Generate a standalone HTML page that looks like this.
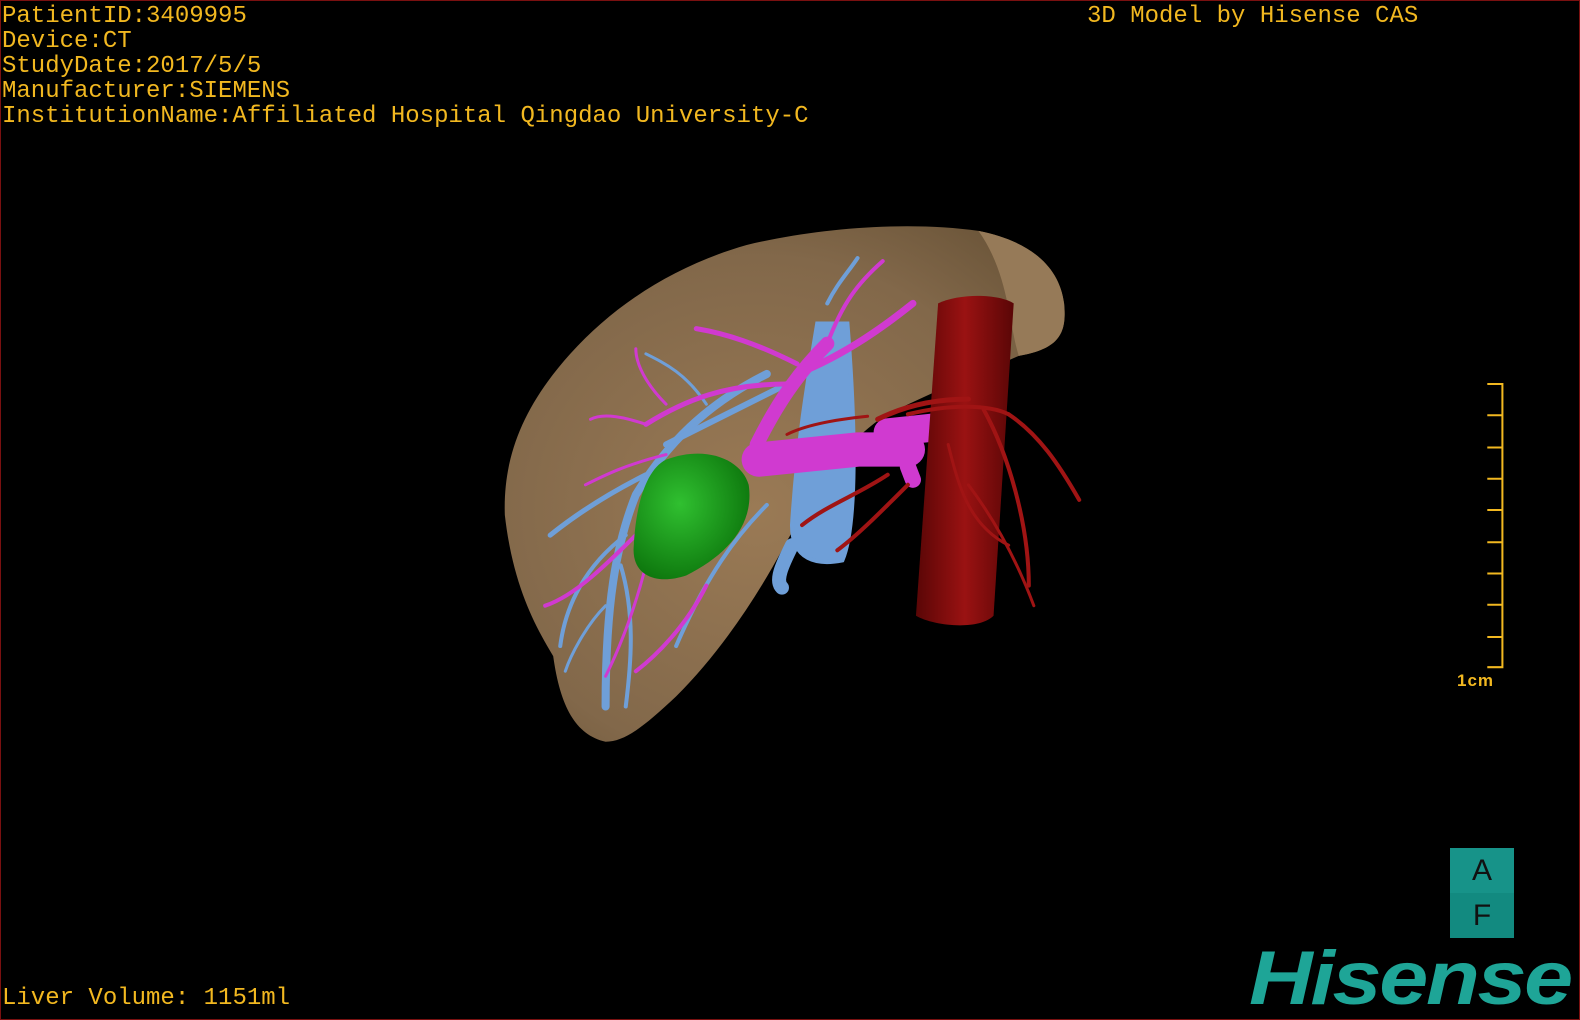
<!DOCTYPE html>
<html><head><meta charset="utf-8"><style>
html,body{margin:0;padding:0;background:#000;}
#w{position:relative;width:1580px;height:1020px;background:#000;overflow:hidden;box-sizing:border-box;border:1px solid #7a1010;}
.t{position:absolute;font-family:"Liberation Mono",monospace;font-size:24px;color:#f2b820;white-space:pre;line-height:25px;}
svg{position:absolute;left:0;top:0;}
</style></head><body><div id="w">
<svg width="1580" height="1020" viewBox="0 0 1568 1012">
<defs>
<radialGradient id="lv" cx="0.45" cy="0.55" r="0.7"><stop offset="0" stop-color="#9a7a55"/><stop offset="0.7" stop-color="#82684a"/><stop offset="1" stop-color="#6a5438"/></radialGradient>
<radialGradient id="gr" cx="0.4" cy="0.4" r="0.7"><stop offset="0" stop-color="#30c030"/><stop offset="1" stop-color="#0a700a"/></radialGradient>
<linearGradient id="ao" x1="0" x2="1"><stop offset="0" stop-color="#5a0606"/><stop offset="0.5" stop-color="#9a1212"/><stop offset="1" stop-color="#5a0606"/></linearGradient>
</defs>
<path d="M600,735 C570,728 555,700 548,650 C530,620 508,580 500,510 C498,450 520,400 565,350 C610,300 670,262 740,242 C810,225 900,218 970,228 C1020,238 1050,262 1055,300 C1058,330 1050,345 1010,352 C970,370 930,385 880,410 C830,440 800,500 775,545 C745,600 710,650 670,690 C640,718 620,735 600,735 Z" fill="url(#lv)"/>
<path d="M970,228 C1020,238 1050,262 1055,300 C1058,330 1050,345 1010,352 C1000,320 1000,270 970,228 Z" fill="#967a58"/>
<g stroke="#6f9fd8" fill="none" stroke-linecap="round">
<path d="M810,320 C800,380 790,440 785,520 C785,555 810,560 835,555 C850,520 848,420 840,320 Z" fill="#6f9fd8" stroke-width="4"/>
<path d="M785,540 C775,560 768,575 775,582" stroke-width="14"/>
<path d="M760,370 C700,400 660,440 630,490 C610,540 600,600 600,700" stroke-width="8"/>
<path d="M640,470 C600,490 570,510 545,530" stroke-width="5"/>
<path d="M620,530 C580,560 560,600 555,640" stroke-width="4"/>
<path d="M615,560 C630,610 625,660 620,700" stroke-width="4"/>
<path d="M660,440 C700,420 740,400 780,380" stroke-width="6"/>
<path d="M700,400 C680,370 660,360 640,350" stroke-width="3"/>
<path d="M760,500 C730,530 700,570 670,640" stroke-width="4"/>
<path d="M600,600 C580,620 565,650 560,665" stroke-width="3"/>
<path d="M820,300 C830,280 840,270 850,255" stroke-width="4"/>
</g>
<g stroke="#d03ad0" fill="none" stroke-linecap="round">
<path d="M752,455 L850,445 L900,445" stroke-width="34"/>
<path d="M880,428 L955,420" stroke-width="28"/>
<path d="M750,440 C770,400 790,370 820,340" stroke-width="14"/>
<path d="M790,370 C840,350 880,320 905,300" stroke-width="7"/>
<path d="M790,360 C750,340 720,330 690,325" stroke-width="5"/>
<path d="M780,380 C720,380 680,395 640,420" stroke-width="5"/>
<path d="M660,400 C640,380 630,360 630,345" stroke-width="3"/>
<path d="M820,340 C835,300 850,280 875,258" stroke-width="4"/>
<path d="M660,450 C620,460 600,470 580,480" stroke-width="3"/>
<path d="M640,520 C600,560 570,590 540,600" stroke-width="4"/>
<path d="M640,560 C630,600 615,640 600,670" stroke-width="3"/>
<path d="M700,580 C680,620 650,650 630,665" stroke-width="4"/>
<path d="M640,420 C610,410 595,410 585,415" stroke-width="3"/>
<path d="M900,462 L905,475" stroke-width="16"/>
</g>
<path d="M660,455 C700,440 735,455 742,480 C748,520 720,550 680,570 C650,580 625,570 628,540 C630,500 640,465 660,455 Z" fill="url(#gr)"/>
<path d="M930,300 C950,290 990,290 1005,300 L985,610 C970,625 925,620 908,610 Z" fill="url(#ao)"/>
<g stroke="#a01414" fill="none" stroke-linecap="round">
<path d="M870,415 C900,400 930,395 960,395" stroke-width="5"/>
<path d="M900,410 C940,400 980,400 1000,410" stroke-width="4"/>
<path d="M1000,410 C1030,430 1050,460 1070,495" stroke-width="4"/>
<path d="M975,405 C1000,450 1020,520 1020,580" stroke-width="4"/>
<path d="M880,470 C850,490 820,500 795,520" stroke-width="4"/>
<path d="M900,480 C870,510 850,530 830,545" stroke-width="4"/>
<path d="M940,440 C950,480 960,520 1000,540" stroke-width="3"/>
<path d="M960,480 C990,520 1010,560 1025,600" stroke-width="3"/>
<path d="M780,430 C800,420 830,415 860,412" stroke-width="3"/>
</g>
<g stroke="#f2b820" stroke-width="2" fill="none">
<path d="M1475,380 H1490 V661 H1475"/>
<path d="M1475,411H1490M1475,443H1490M1475,474H1490M1475,505H1490M1475,537H1490M1475,568H1490M1475,599H1490M1475,631H1490"/>
</g>
</svg>
<div class="t" style="left:1px;top:3px">PatientID:3409995
Device:CT
StudyDate:2017/5/5
Manufacturer:SIEMENS
InstitutionName:Affiliated Hospital Qingdao University-C</div>
<div class="t" style="left:1086px;top:3px">3D Model by Hisense CAS</div>
<div class="t" style="left:1px;top:985px">Liver Volume: 1151ml</div>
<div style="position:absolute;left:1456px;top:670px;font:bold 17px 'Liberation Sans',sans-serif;color:#f2b820;letter-spacing:1px">1cm</div>
<div style="position:absolute;left:1449px;top:847px;width:64px;height:90px;background:#128a80;">
<div style="height:45px;background:#179389;text-align:center;font:30px/45px 'Liberation Sans',sans-serif;color:#111">A</div>
<div style="height:45px;text-align:center;font:30px/45px 'Liberation Sans',sans-serif;color:#111">F</div></div>
<div style="position:absolute;left:1248px;top:938px;font:italic bold 76px/80px 'Liberation Sans',sans-serif;color:#1ea597;letter-spacing:-2px;transform:scaleX(1.16);transform-origin:left top">Hisense</div>
</div></body></html>
